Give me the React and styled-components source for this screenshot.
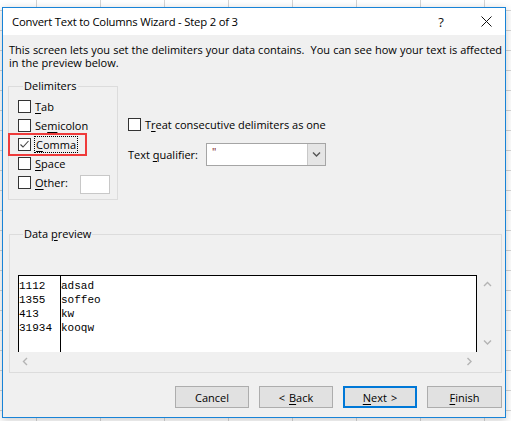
import React from 'react';
import styled, { createGlobalStyle } from 'styled-components';

const Global = createGlobalStyle`
  html, body { margin: 0; }
  body {
    padding: 7px 0 0 2px;
    width: 511px;
    height: 421px;
    box-sizing: border-box;
    overflow: hidden;
    background-color: #ffffff;
    background-image:
      linear-gradient(to right, #d4d4d4 1px, transparent 1px),
      linear-gradient(to bottom, #d4d4d4 1px, transparent 1px);
    background-size: 64px 20px;
    background-position: 36px 10px;
    font-family: "Open Sans", "Noto Sans", sans-serif;
    font-size: 11px;
    color: #000;
  }
`;

const Dialog = styled.div`
  box-sizing: border-box;
  width: 504px;
  height: 411px;
  border: 1px solid #1883d7;
  background: #f0f0f0;
  box-shadow: 0 2px 8px rgba(0, 0, 0, 0.22);
  display: flex;
  flex-direction: column;
`;

const TitleBar = styled.div`
  height: 27px;
  flex: none;
  background: #ffffff;
  display: flex;
  align-items: center;
  padding-left: 9px;
`;

const Title = styled.div`
  flex: 1;
  font-size: 11.3px;
  letter-spacing: -0.2px;
  white-space: nowrap;
`;

const TitleButton = styled.div`
  width: ${p => p.w}px;
  height: 27px;
  display: flex;
  align-items: center;
  justify-content: center;
  font-size: 13px;
  color: #111;
`;

const Body = styled.div`
  flex: 1;
  display: flex;
  flex-direction: column;
  padding: 0 3px 0 5px;
`;

const Description = styled.p`
  margin: 8px 0 0 1px;
  line-height: 13px;
  height: 26px;
  white-space: pre;
  word-spacing: 0.2px;
`;

const Middle = styled.div`
  display: flex;
  margin-top: 9px;
  height: 122px;
`;

const Group = styled.fieldset`
  box-sizing: border-box;
  margin: ${p => p.mt || 0}px 0 0 ${p => p.ml || 0}px;
  width: ${p => p.w}px;
  height: ${p => p.h}px;
  border: 1px solid #dcdcdc;
  padding: ${p => p.pad};
  min-width: 0;
`;

const Legend = styled.legend`
  margin-left: 5px;
  padding: 0 1px;
  line-height: 16px;
`;

const CheckRow = styled.label`
  position: relative;
  display: flex;
  align-items: center;
  height: 19px;
  gap: 4px;
  white-space: nowrap;
`;

const Box = styled.span`
  box-sizing: border-box;
  width: 13px;
  height: 13px;
  flex: none;
  border: 1px solid #333333;
  background: #ffffff;
  display: flex;
  align-items: center;
  justify-content: center;
`;

const Key = styled.span`
  text-decoration: underline;
  text-underline-offset: 2px;
`;

const Focus = styled.span`
  padding: 0 1px;
  outline: 1px dotted #000;
  outline-offset: 0;
`;

const Highlight = styled.span`
  position: absolute;
  left: -10px;
  top: -2px;
  width: 79px;
  height: 23px;
  box-sizing: border-box;
  border: 2px solid #ef3b3b;
  pointer-events: none;
`;

const OtherInput = styled.span`
  box-sizing: border-box;
  width: 30px;
  height: 19px;
  margin: 4px 0 0 8px;
  background: #ffffff;
  border: 1px solid #c8c8c8;
`;

const Options = styled.div`
  display: flex;
  flex-direction: column;
  margin-left: 10px;
  padding-top: 37px;
`;

const QualifierRow = styled.div`
  display: flex;
  align-items: center;
  margin-top: 9px;
`;

const QualifierLabel = styled.span`
  width: 78px;
  white-space: nowrap;
`;

const Select = styled.div`
  box-sizing: border-box;
  width: 120px;
  height: 23px;
  border: 1px solid #a5a5a5;
  background: #ffffff;
  display: flex;
`;

const SelectValue = styled.span`
  flex: 1;
  padding: 0 0 0 5px;
  color: #7a1414;
  font-size: 11px;
  line-height: 16px;
`;

const SelectButton = styled.span`
  width: 17px;
  border-left: 1px solid #c8c8c8;
  background: #e5e5e5;
  display: flex;
  align-items: center;
  justify-content: center;
`;

const Preview = styled.div`
  display: grid;
  grid-template-columns: 459px 19px;
  grid-template-rows: 77px 18px;
`;

const Sheet = styled.div`
  box-sizing: border-box;
  background: #ffffff;
  border: 1px solid #000;
  border-bottom: none;
  display: flex;
  overflow: hidden;
`;

const Column = styled.div`
  box-sizing: border-box;
  width: ${p => (p.w ? `${p.w}px` : 'auto')};
  flex: ${p => (p.w ? 'none' : 1)};
  border-right: ${p => (p.divider ? '1px solid #000' : 'none')};
  padding-top: 3px;
  font-family: "Liberation Mono", "Courier New", monospace;
  font-size: 11px;
  line-height: 14px;
  white-space: pre;
`;

const VScroll = styled.div`
  display: flex;
  flex-direction: column;
  justify-content: space-between;
  align-items: center;
  padding: 5px 0 5px 1px;
`;

const HScroll = styled.div`
  grid-column: 1 / 3;
  display: flex;
  justify-content: space-between;
  align-items: center;
  padding: 0 22px 0 3px;
`;

const Buttons = styled.div`
  display: flex;
  justify-content: flex-end;
  gap: 10px;
  margin-top: 13px;
`;

const Button = styled.div`
  box-sizing: border-box;
  width: ${p => p.w || 74}px;
  height: 22px;
  display: flex;
  align-items: center;
  justify-content: center;
  gap: ${p => p.gap || 0}px;
  background: #e1e1e1;
  border: ${p => (p.primary ? '2px solid #0078d7' : '1px solid #adadad')};
  white-space: pre;
`;

const Chevron = ({ dir, color = '#b4b4b4' }) => {
  const pts = {
    up: '1,6 4.5,2.5 8,6',
    down: '1,2.5 4.5,6 8,2.5',
    left: '6,1 2.5,4.5 6,8',
    right: '2.5,1 6,4.5 2.5,8',
  }[dir];
  return (
    <svg width="9" height="9" viewBox="0 0 9 9">
      <polyline points={pts} fill="none" stroke={color} strokeWidth="1.4" />
    </svg>
  );
};

const Check = () => (
  <svg width="11" height="11" viewBox="0 0 11 11">
    <polyline points="1.5,5.5 4,8 9.5,2" fill="none" stroke="#444" strokeWidth="1.1" />
  </svg>
);

const Checkbox = ({ checked, children, highlight }) => (
  <CheckRow>
    <Box>{checked && <Check />}</Box>
    {children}
    {highlight && <Highlight />}
  </CheckRow>
);

const rows = [
  ['1112', 'adsad'],
  ['1355', 'soffeo'],
  ['413', 'kw'],
  ['31934', 'kooqw'],
];

export default function App() {
  return (
    <>
      <Global />
      <Dialog>
        <TitleBar>
          <Title>Convert Text to Columns Wizard - Step 2 of 3</Title>
          <TitleButton w={52}>?</TitleButton>
          <TitleButton w={38}>
            <svg width="11" height="11" viewBox="0 0 11 11">
              <path d="M0.5 0.5 L10.5 10.5 M10.5 0.5 L0.5 10.5" stroke="#111" strokeWidth="1" />
            </svg>
          </TitleButton>
        </TitleBar>
        <Body>
          <Description>
            {'This screen lets you set the delimiters your data contains.  You can see how your text is affected\nin the preview below.'}
          </Description>
          <Middle>
            <Group w={110} h={122} pad="3px 0 0 9px">
              <Legend>Delimiters</Legend>
              <Checkbox><span><Key>T</Key>ab</span></Checkbox>
              <Checkbox><span>Se<Key>m</Key>icolon</span></Checkbox>
              <Checkbox checked highlight>
                <Focus><Key>C</Key>omma</Focus>
              </Checkbox>
              <Checkbox><span><Key>S</Key>pace</span></Checkbox>
              <Checkbox>
                <span><Key>O</Key>ther:</span>
                <OtherInput />
              </Checkbox>
            </Group>
            <Options>
              <Checkbox><span>T<Key>r</Key>eat consecutive delimiters as one</span></Checkbox>
              <QualifierRow>
                <QualifierLabel>Text <Key>q</Key>ualifier:</QualifierLabel>
                <Select>
                  <SelectValue>"</SelectValue>
                  <SelectButton><Chevron dir="down" color="#555" /></SelectButton>
                </Select>
              </QualifierRow>
            </Options>
          </Middle>
          <Group w={493} h={147} ml={1} mt={26} pad="33px 0 0 8px">
            <Legend>Data <Key>p</Key>review</Legend>
            <Preview>
              <Sheet>
                <Column w={42} divider>{rows.map(r => r[0]).join('\n')}</Column>
                <Column>{rows.map(r => r[1]).join('\n')}</Column>
              </Sheet>
              <VScroll>
                <Chevron dir="up" />
                <Chevron dir="down" />
              </VScroll>
              <HScroll>
                <Chevron dir="left" />
                <Chevron dir="right" />
              </HScroll>
            </Preview>
          </Group>
          <Buttons>
            <Button>Cancel</Button>
            <Button gap={4}><span>&lt;</span><span><Key>B</Key>ack</span></Button>
            <Button primary gap={4}><span><Key>N</Key>ext</span><span>&gt;</span></Button>
            <Button w={75}><Key>F</Key>inish</Button>
          </Buttons>
        </Body>
      </Dialog>
    </>
  );
}
